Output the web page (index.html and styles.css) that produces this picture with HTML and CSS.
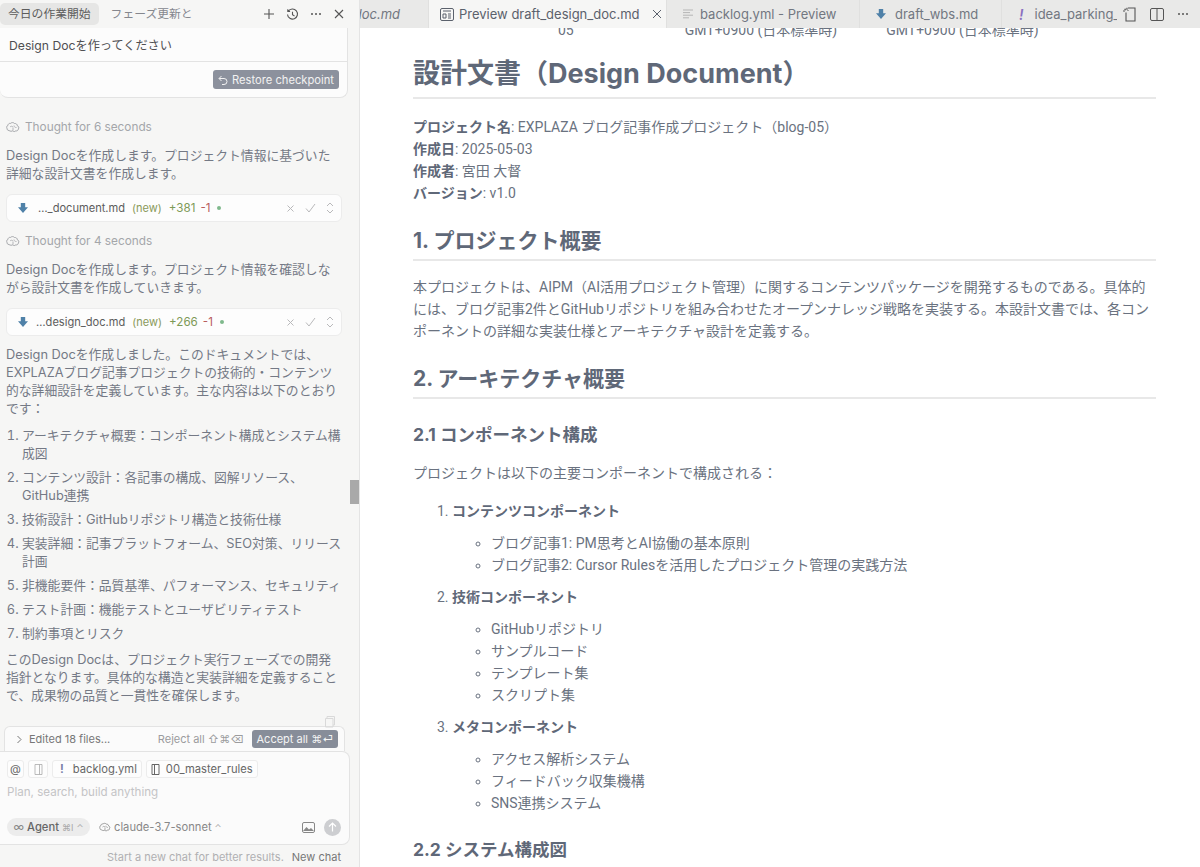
FILE: index.html
```html
<!DOCTYPE html>
<html>
<head>
    <meta charset="UTF-8">
    <title>Preview draft_design_doc.md</title>
    <link rel="stylesheet" href="styles.css">
</head>
<body>
<svg class="defs" width="0" height="0">
    <symbol id="i-brain" viewBox="0 0 14 12">
        <path d="M3 9.500C1.500 9.500.8 8.300 1 7.200.3 6.300.7 4.800 1.900 4.500 2 3 3.300 2 4.600 2.400 5.500 1.300 7.600 1.300 8.500 2.500 10 2.300 11.300 3.300 11.300 4.700 12.800 5.200 13.300 7 12.300 8 12.300 9.300 11 10.300 9.800 9.800 9 10.800 7.500 10.800 6.800 9.800 5.800 10.500 4 10.300 3 9.500Z" fill="none" stroke="currentColor"/>
        <path d="M4 6c1-1 2-1 3 0M8 4.500c0 1.500 1 2 2.500 2M7 6.500v3" fill="none" stroke="currentColor" stroke-width=".8"/>
    </symbol>
    <symbol id="i-md" viewBox="0 0 12 12">
        <path d="M3.800 1h4.400v4.200H11L6 11 1 5.200h2.800z" fill="currentColor"/>
    </symbol>
</svg>

<div class="app">
    <aside class="sidebar">
        <div class="chat">
            <header class="chat-head">
                <span class="chat-tab active">今日の作業開始</span>
                <span class="chat-tab">フェーズ更新と</span>
                <div class="head-icons">
                    <svg width="12" height="12" viewBox="0 0 12 12"><path d="M6 1v10M1 6h10" stroke="currentColor" stroke-width="1.100"/></svg>
                    <svg width="13" height="13" viewBox="0 0 13 13"><path d="M2.300 3.300A5 5 0 1 1 1.500 6.500M1.800 1.200v2.300h2.300M6.500 3.800v3l2 1.200" fill="none" stroke="currentColor" stroke-width="1.100"/></svg>
                    <svg width="12" height="12" viewBox="0 0 12 12"><g fill="currentColor"><circle cx="2" cy="6" r="1"/><circle cx="6" cy="6" r="1"/><circle cx="10" cy="6" r="1"/></g></svg>
                    <svg width="12" height="12" viewBox="0 0 12 12"><path d="M2 2l8 8M10 2l-8 8" stroke="currentColor" stroke-width="1.100"/></svg>
                </div>
            </header>

            <section class="user-card">
                <div class="user-text">Design Docを作ってください</div>
                <div class="user-foot">
                    <button class="restore">
                        <svg width="10" height="10" viewBox="0 0 10 10"><path d="M3.500 1L1 3.500 3.500 6M1.200 3.500H6a3 3 0 0 1 0 6H4" fill="none" stroke="currentColor"/></svg>
                        Restore checkpoint
                    </button>
                </div>
            </section>

            <div class="thought"><svg width="14" height="12"><use href="#i-brain"/></svg>Thought for 6 seconds</div>
            <p class="msg">Design Docを作成します。プロジェクト情報に基づいた詳細な設計文書を作成します。</p>
            <div class="file-row">
                <svg class="md" width="12" height="12"><use href="#i-md"/></svg>
                <span class="fname">…_document.md</span>
                <span class="new">(new)</span>
                <span class="plus">+381</span>
                <span class="minus">-1</span>
                <span class="dot"></span>
                <div class="row-icons">
                    <svg width="9" height="9" viewBox="0 0 9 9"><path d="M1.500 1.500l6 6M7.500 1.500l-6 6" stroke="currentColor"/></svg>
                    <svg width="11" height="10" viewBox="0 0 11 10"><path d="M1 5.500l3 3.500 6-8" fill="none" stroke="currentColor"/></svg>
                    <svg width="8" height="12" viewBox="0 0 8 12"><path d="M1 4l3-3 3 3M1 8l3 3 3-3" fill="none" stroke="currentColor"/></svg>
                </div>
            </div>

            <div class="thought"><svg width="14" height="12"><use href="#i-brain"/></svg>Thought for 4 seconds</div>
            <p class="msg">Design Docを作成します。プロジェクト情報を確認しながら設計文書を作成していきます。</p>
            <div class="file-row">
                <svg class="md" width="12" height="12"><use href="#i-md"/></svg>
                <span class="fname tight">…design_doc.md</span>
                <span class="new">(new)</span>
                <span class="plus">+266</span>
                <span class="minus">-1</span>
                <span class="dot"></span>
                <div class="row-icons">
                    <svg width="9" height="9" viewBox="0 0 9 9"><path d="M1.500 1.500l6 6M7.500 1.500l-6 6" stroke="currentColor"/></svg>
                    <svg width="11" height="10" viewBox="0 0 11 10"><path d="M1 5.500l3 3.500 6-8" fill="none" stroke="currentColor"/></svg>
                    <svg width="8" height="12" viewBox="0 0 8 12"><path d="M1 4l3-3 3 3M1 8l3 3 3-3" fill="none" stroke="currentColor"/></svg>
                </div>
            </div>

            <p class="msg summary">Design Docを作成しました。このドキュメントでは、EXPLAZAブログ記事プロジェクトの技術的・コンテンツ的な詳細設計を定義しています。主な内容は以下のとおりです：</p>
            <ol class="msg-list">
                <li>アーキテクチャ概要：コンポーネント構成とシステム構成図</li>
                <li>コンテンツ設計：各記事の構成、図解リソース、GitHub連携</li>
                <li>技術設計：GitHubリポジトリ構造と技術仕様</li>
                <li>実装詳細：記事プラットフォーム、SEO対策、リリース計画</li>
                <li>非機能要件：品質基準、パフォーマンス、セキュリティ</li>
                <li>テスト計画：機能テストとユーザビリティテスト</li>
                <li>制約事項とリスク</li>
            </ol>
            <p class="msg closing">このDesign Docは、プロジェクト実行フェーズでの開発指針となります。具体的な構造と実装詳細を定義することで、成果物の品質と一貫性を確保します。</p>

            <div class="dock">
                <svg class="copy" width="12" height="13" viewBox="0 0 12 13"><path d="M3 3V1.500h7.500V10H9M1.500 3.500H9V12H1.500z" fill="none" stroke="currentColor"/></svg>
                <div class="edited">
                    <svg width="7" height="9" viewBox="0 0 7 9"><path d="M1.500 1l3.500 3.500L1.500 8" fill="none" stroke="currentColor"/></svg>
                    <span class="edited-label">Edited 18 files...</span>
                    <span class="reject">Reject all ⇧⌘⌫</span>
                    <button class="accept">Accept all ⌘⏎</button>
                </div>
                <div class="composer">
                    <div class="chips">
                        <span class="chip">@</span>
                        <span class="chip wide"><svg width="9" height="11" viewBox="0 0 9 11"><path d="M1 .5h7v10H1zM5.500 .5v10" fill="none" stroke="currentColor" stroke-width=".8"/></svg></span>
                        <span class="chip named"><b class="bang">!</b>backlog.yml</span>
                        <span class="chip named"><svg width="9" height="11" viewBox="0 0 9 11"><path d="M1 .5h7v10H1zM3.500 .5v10" fill="none" stroke="currentColor"/></svg>00_master_rules</span>
                    </div>
                    <div class="placeholder">Plan, search, build anything</div>
                    <div class="composer-foot">
                        <span class="agent">∞ <b>Agent</b> <small>⌘I</small> <small>⌃</small></span>
                        <span class="model"><svg width="12" height="10"><use href="#i-brain"/></svg>claude-3.7-sonnet <small>⌃</small></span>
                        <svg class="img-icon" width="13" height="11" viewBox="0 0 13 11"><rect x=".5" y=".5" width="12" height="10" rx="1.500" fill="none" stroke="currentColor"/><path d="M1 9l3.500-4 2.500 2.500 2-1.500 3 3z" fill="currentColor"/></svg>
                        <span class="send"><svg width="9" height="10" viewBox="0 0 9 10"><path d="M4.500 9.500V1M1 4.500L4.500 1 8 4.500" fill="none" stroke="#fff" stroke-width="1.200"/></svg></span>
                    </div>
                </div>
                <div class="newchat"><span>Start a new chat for better results.</span><b>New chat</b></div>
            </div>
        </div>
        <div class="gutter"><div class="thumb"></div></div>
    </aside>

    <main class="main">
        <nav class="tabs">
            <div class="tab tab-clip"><i>draft_design_doc.md</i></div>
            <div class="tab tab-active">
                <svg class="prev-ico" width="14" height="13" viewBox="0 0 14 13"><rect x=".5" y=".5" width="13" height="12" rx="1.500" fill="none" stroke="currentColor"/><path d="M3 3h8M3 6h3v4H3zM8 6h3M8 8h3M8 10h3" fill="none" stroke="currentColor"/></svg>
                <span>Preview draft_design_doc.md</span>
                <svg class="tab-x" width="10" height="10" viewBox="0 0 10 10"><path d="M1 1l8 8M9 1l-8 8" stroke="currentColor"/></svg>
            </div>
            <div class="tab tab-backlog">
                <svg class="ico-lines" width="12" height="10" viewBox="0 0 12 10"><path d="M1 1h10M1 3.600h7M1 6.200h10M1 8.800h6" stroke="currentColor"/></svg>
                <span>backlog.yml - Preview</span>
            </div>
            <div class="tab tab-wbs">
                <svg class="md" width="12" height="12"><use href="#i-md"/></svg>
                <span>draft_wbs.md</span>
            </div>
            <div class="tab tab-idea">
                <em class="bang-big">!</em>
                <span>idea_parking_</span>
            </div>
            <div class="tab-actions">
                <svg width="16" height="15" viewBox="0 0 16 15"><path d="M4 4H2M6 2V.8M3.500 2L4.800 3.200M5 5.500V14h9V1H7" fill="none" stroke="currentColor" stroke-width="1.100"/><path d="M5 1.500L7.500 4" stroke="currentColor"/></svg>
                <svg width="14" height="13" viewBox="0 0 14 13"><rect x=".5" y=".5" width="13" height="12" rx="1.500" fill="none" stroke="currentColor"/><path d="M7 .5v12" stroke="currentColor"/></svg>
                <svg width="12" height="12" viewBox="0 0 12 12"><g fill="currentColor"><circle cx="2" cy="6" r="1"/><circle cx="6" cy="6" r="1"/><circle cx="10" cy="6" r="1"/></g></svg>
            </div>
        </nav>

        <article class="doc">
            <div class="table-tail">
                <span class="c1">05</span>
                <span class="c2">GMT+0900 (日本標準時)</span>
                <span class="c3">GMT+0900 (日本標準時)</span>
            </div>

            <h1>設計文書（Design Document）</h1>
            <p>
                <strong>プロジェクト名</strong>: EXPLAZA ブログ記事作成プロジェクト（blog-05）<br>
                <strong>作成日</strong>: 2025-05-03<br>
                <strong>作成者</strong>: 宮田 大督<br>
                <strong>バージョン</strong>: v1.0
            </p>

            <h2>1. プロジェクト概要</h2>
            <p>本プロジェクトは、AIPM（AI活用プロジェクト管理）に関するコンテンツパッケージを開発するものである。具体的には、ブログ記事2件とGitHubリポジトリを組み合わせたオープンナレッジ戦略を実装する。本設計文書では、各コンポーネントの詳細な実装仕様とアーキテクチャ設計を定義する。</p>

            <h2>2. アーキテクチャ概要</h2>
            <h3>2.1 コンポーネント構成</h3>
            <p>プロジェクトは以下の主要コンポーネントで構成される：</p>
            <ol>
                <li><strong>コンテンツコンポーネント</strong>
                    <ul>
                        <li>ブログ記事1: PM思考とAI協働の基本原則</li>
                        <li>ブログ記事2: Cursor Rulesを活用したプロジェクト管理の実践方法</li>
                    </ul>
                </li>
                <li><strong>技術コンポーネント</strong>
                    <ul>
                        <li>GitHubリポジトリ</li>
                        <li>サンプルコード</li>
                        <li>テンプレート集</li>
                        <li>スクリプト集</li>
                    </ul>
                </li>
                <li><strong>メタコンポーネント</strong>
                    <ul>
                        <li>アクセス解析システム</li>
                        <li>フィードバック収集機構</li>
                        <li>SNS連携システム</li>
                    </ul>
                </li>
            </ol>
            <h3>2.2 システム構成図</h3>
        </article>
    </main>
</div>
</body>
</html>
```

FILE: styles.css
```css
* {
    box-sizing: border-box;
}
html, body {
    margin: 0;
    height: 867px;
    overflow: hidden;
}
body {
    font-family: Inter, "Noto Sans CJK JP", sans-serif;
    background-color: #fff;
    color: #6a7280;
}
.defs {
    display: block;
    height: 0;
}
.app {
    display: flex;
    height: 867px;
}

/* left chat panel */
.sidebar {
    width: 360px;
    flex: none;
    display: flex;
    background-color: #f6f6f5;
    border-right: 1px solid #e4e4e4;
}
.chat {
    width: 350px;
    flex: none;
    display: flex;
    flex-direction: column;
    font-size: 12.8px;
    color: #747985;
}
.gutter {
    flex: 1;
    padding-top: 480px;
}
.thumb {
    height: 24px;
    background-color: #a9a9a9;
}
.chat-head {
    height: 28px;
    flex: none;
    display: flex;
    align-items: center;
    font-size: 11.8px;
}
.chat-tab {
    padding: 0 8px;
    height: 22px;
    line-height: 22px;
    color: #85878e;
    margin-right: 5px;
    white-space: nowrap;
}
.chat-tab.active {
    background-color: #e6e6e5;
    border-radius: 5px;
    color: #5c5c5c;
    margin-right: 4px;
}
.head-icons {
    margin-left: auto;
    display: flex;
    align-items: center;
    gap: 11px;
    padding-right: 5px;
    color: #555;
}
.user-card {
    flex: none;
    height: 70px;
    width: 348px;
    background-color: #fcfcfc;
    border: 1px solid #e3e3e3;
    border-top: 0;
    border-left: 0;
    border-radius: 0 0 8px 8px;
}
.user-text {
    height: 34px;
    padding: 8px 9px 0;
    font-size: 12.2px;
    line-height: 20px;
    color: #4f4f52;
    border-bottom: 1px solid #e3e3e3;
}
.user-foot {
    display: flex;
    justify-content: flex-end;
    padding: 8px 8px 0 0;
}
.restore {
    display: flex;
    align-items: center;
    gap: 4px;
    height: 19px;
    padding: 0 5px;
    border: 0;
    border-radius: 3px;
    background-color: #8c919d;
    color: #f2f2f2;
    font: 11.2px Inter, sans-serif;
}
.thought {
    margin: 20px 6px 0;
    height: 18px;
    display: flex;
    align-items: center;
    gap: 5px;
    font-size: 11.8px;
    color: #a4a6aa;
}
.file-row + .thought {
    margin-top: 10px;
}
.msg {
    margin: 11px 12px 0 6px;
    line-height: 18px;
}
.msg.summary {
    margin-top: 10px;
}
.msg.closing {
    margin-top: 8px;
}
.file-row {
    flex: none;
    margin: 11px 8px 0 6px;
    height: 28px;
    display: flex;
    align-items: center;
    padding: 0 7px 0 10px;
    background-color: #fdfdfd;
    border: 1px solid #ececec;
    border-radius: 6px;
    font-size: 11.6px;
}
.md {
    color: #4f81a8;
    flex: none;
}
.file-row .md {
    margin-right: 9px;
}
.fname {
    color: #5c5c5c;
    font-size: 11.1px;
    margin-right: 7px;
}
.fname.tight {
    margin-left: -2px;
}
.new {
    color: #8a9a5b;
    font-size: 11px;
    margin-right: 7px;
}
.plus {
    color: #7d9a57;
    margin-right: 5px;
}
.minus {
    color: #b85c5c;
    margin-right: 7px;
}
.dot {
    width: 4px;
    height: 4px;
    border-radius: 50%;
    background-color: #7fb98c;
}
.row-icons {
    margin-left: auto;
    display: flex;
    align-items: center;
    gap: 10px;
    color: #b9b9bb;
}
.msg-list {
    margin: 9px 6px 0;
    padding: 0 0 0 16px;
    line-height: 18px;
}
.msg-list li {
    margin-bottom: 6px;
}
.msg-list li:last-child {
    margin-bottom: 0;
}
.dock {
    margin-top: auto;
    position: relative;
    flex: none;
}
.copy {
    position: absolute;
    right: 14px;
    top: -11px;
    color: #d9d9d9;
}
.edited {
    margin: 0 5px 0 4px;
    height: 25px;
    display: flex;
    align-items: center;
    padding: 0 6px 0 11px;
    background-color: #fbfbfb;
    border: 1px solid #e3e3e3;
    border-bottom: 0;
    border-radius: 6px 6px 0 0;
    font-size: 11px;
    color: #777;
}
.edited-label {
    margin-left: 6px;
}
.reject {
    margin-left: auto;
    color: #9c9c9e;
    margin-right: 8px;
    white-space: nowrap;
}
.accept {
    height: 18px;
    padding: 0 5px;
    border: 0;
    border-radius: 3px;
    background-color: #878d99;
    color: #f4f4f4;
    font: 11px Inter, sans-serif;
    white-space: nowrap;
}
.composer {
    height: 94px;
    background-color: #fbfbfb;
    border: 1px solid #e3e3e3;
    border-left: 0;
    border-radius: 0 8px 8px 0;
    padding: 8px 8px 0 7px;
}
.chips {
    display: flex;
    gap: 4px;
}
.chip {
    height: 18px;
    min-width: 17px;
    display: flex;
    align-items: center;
    justify-content: center;
    border: 1px solid #ececec;
    border-radius: 3px;
    background-color: #fdfdfd;
    font-size: 11.2px;
    color: #666;
}
.chip.wide {
    width: 20px;
    color: #aaa;
}
.chip.named {
    padding: 0 4px;
    gap: 6px;
}
.bang {
    color: #7a7fa8;
    padding: 0 3px;
}
.placeholder {
    margin-top: 5px;
    height: 18px;
    line-height: 18px;
    font-size: 11.6px;
    color: #c4c4c6;
}
.composer-foot {
    margin-top: 17px;
    display: flex;
    align-items: center;
    font-size: 11.2px;
}
.agent {
    height: 18px;
    width: 83px;
    display: flex;
    align-items: center;
    justify-content: center;
    gap: 3px;
    background-color: #ececec;
    border-radius: 9px;
    color: #888;
}
.agent b {
    color: #666;
    font-weight: 500;
}
small {
    font-size: 9px;
    color: #aaa;
}
.model {
    margin-left: 9px;
    display: flex;
    align-items: center;
    gap: 3px;
    color: #888;
}
.img-icon {
    margin-left: auto;
    margin-right: 9px;
    color: #888;
}
.send {
    width: 17px;
    height: 17px;
    border-radius: 50%;
    background-color: #cdced1;
    display: flex;
    align-items: center;
    justify-content: center;
}
.newchat {
    height: 22px;
    padding: 5px 9px 0 0;
    display: flex;
    justify-content: flex-end;
    gap: 8px;
    font-size: 11px;
    color: #b0b0b2;
}
.newchat b {
    font-weight: 400;
    color: #777;
}

/* editor tabs */
.main {
    flex: 1;
    min-width: 0;
    display: flex;
    flex-direction: column;
}
.tabs {
    height: 28px;
    flex: none;
    display: flex;
    background-color: #e9e9e8;
    font-size: 13px;
    color: #727781;
}
.tab {
    height: 28px;
    display: flex;
    align-items: center;
    flex: none;
    overflow: hidden;
    white-space: nowrap;
    border-right: 1px solid #e0e0df;
}
.tab-clip {
    width: 69px;
    justify-content: flex-end;
    padding-right: 28px;
}
.tab-clip i {
    flex: none;
}
.tab-active {
    width: 238px;
    padding-left: 11px;
    background-color: #f6f6f5;
    color: #5b616c;
    gap: 5px;
}
.tab-x {
    margin-left: 7px;
    flex: none;
}
.tab-backlog {
    width: 193px;
    padding-left: 15px;
    gap: 6px;
}
.ico-lines {
    color: #b5b5b5;
    flex: none;
}
.tab-wbs {
    width: 142px;
    padding-left: 15px;
    gap: 8px;
}
.tab-idea {
    width: 115px;
    padding-left: 17px;
    gap: 11px;
    border-right: 0;
}
.bang-big {
    color: #8a6fc0;
    font-weight: 600;
    font-size: 14px;
}
.tab-actions {
    flex: 1;
    display: flex;
    align-items: center;
    gap: 13px;
    padding-left: 4px;
    color: #555;
}

/* markdown preview */
.doc {
    flex: 1;
    overflow: hidden;
    padding: 0 44px 0 53px;
    font-family: Roboto, "Noto Sans CJK JP", sans-serif;
    font-size: 14px;
    line-height: 22px;
}
.table-tail {
    display: flex;
    margin-top: -8px;
    height: 20px;
    line-height: 20px;
    white-space: nowrap;
}
.c1 {
    margin-left: 145px;
}
.c2 {
    margin-left: 111px;
}
.c3 {
    margin-left: 49px;
}
h1, h2, h3 {
    color: #5f6878;
    font-family: Inter, "Noto Sans CJK JP", sans-serif;
    font-weight: 700;
    margin: 0;
}
h1 {
    margin-top: 16px;
    font-size: 27px;
    line-height: 36px;
    padding-bottom: 5px;
    border-bottom: 2px solid #e8e8e8;
}
h2 {
    margin-top: 23px;
    font-size: 21px;
    line-height: 28px;
    padding-bottom: 4px;
    border-bottom: 2px solid #e8e8e8;
}
h3 {
    margin-top: 23px;
    font-size: 17.500px;
    line-height: 25px;
}
.doc p {
    margin: 15px 0 0;
}
h1 + p {
    padding-top: 2px;
}
.doc strong {
    color: #5f6878;
}
.doc ol {
    margin: 16px 0 0;
    padding-left: 39px;
}
.doc ol > li {
    margin-top: 10px;
}
.doc ul {
    margin: 10px 0 0;
    padding-left: 39px;
    list-style-type: circle;
}
```
